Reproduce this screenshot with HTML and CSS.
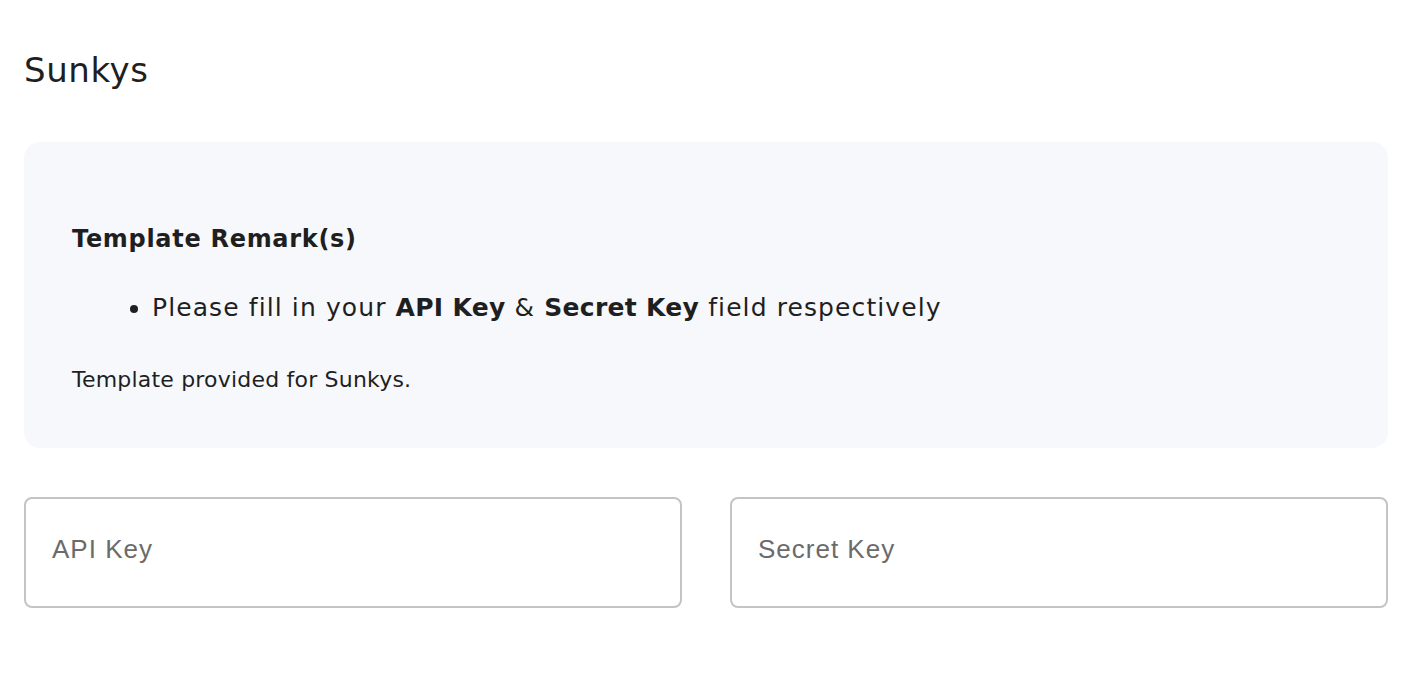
FILE: index.html
```html
<!DOCTYPE html>
<html>
<head>
<meta charset="utf-8">
<link rel="stylesheet" href="styles.css">
</head>
<body>
<div class="page">
  <h1 class="title">Sunkys</h1>
  <section class="remarks">
    <h2 class="remarks-title">Template Remark(s)</h2>
    <ul class="remarks-list">
      <li>Please fill in your <strong>API Key</strong> &amp; <strong>Secret Key</strong> field respectively</li>
    </ul>
    <p class="remarks-note">Template provided for Sunkys.</p>
  </section>
  <div class="fields">
    <input class="field" type="text" placeholder="API Key">
    <input class="field" type="text" placeholder="Secret Key">
  </div>
</div>
</body>
</html>
```

FILE: styles.css
```css
html, body {
  margin: 0;
  padding: 0;
  background: #ffffff;
}
body {
  font-family: "DejaVu Sans", sans-serif;
  color: #1f1f1f;
}
.page {
  padding: 50px 34px 0 24px;
}
.title {
  margin: 0;
  font-size: 34px;
  font-weight: 400;
  line-height: 40px;
  letter-spacing: 0.6px;
  color: #1f1f1f;
}
.remarks {
  margin-top: 52px;
  background: #f7f8fc;
  border-radius: 16px;
  padding: 81px 48px 56px 48px;
}
.remarks-title {
  margin: 0;
  font-size: 24px;
  font-weight: 700;
  line-height: 32px;
  letter-spacing: 0.7px;
}
.remarks-list {
  margin: 37px 0 0 0;
  padding-left: 80px;
  font-size: 25px;
  line-height: 32px;
  letter-spacing: 1.1px;
}
.remarks-list strong {
  font-weight: 700;
  letter-spacing: 0.3px;
}
.remarks-note {
  margin: 44px 0 0 0;
  font-size: 22px;
  line-height: 24px;
  letter-spacing: 0.2px;
}
.fields {
  margin-top: 49px;
  display: grid;
  grid-template-columns: 1fr 1fr;
  gap: 48px;
}
.field {
  box-sizing: border-box;
  height: 111px;
  border: 2px solid #c4c4c4;
  border-radius: 8px;
  padding: 0 26px 6px 26px;
  font-family: "Liberation Sans", sans-serif;
  font-size: 26px;
  letter-spacing: 1px;
  color: #333;
  background: #fff;
  outline: none;
}
.field::placeholder {
  color: #6b6b6b;
}
```
